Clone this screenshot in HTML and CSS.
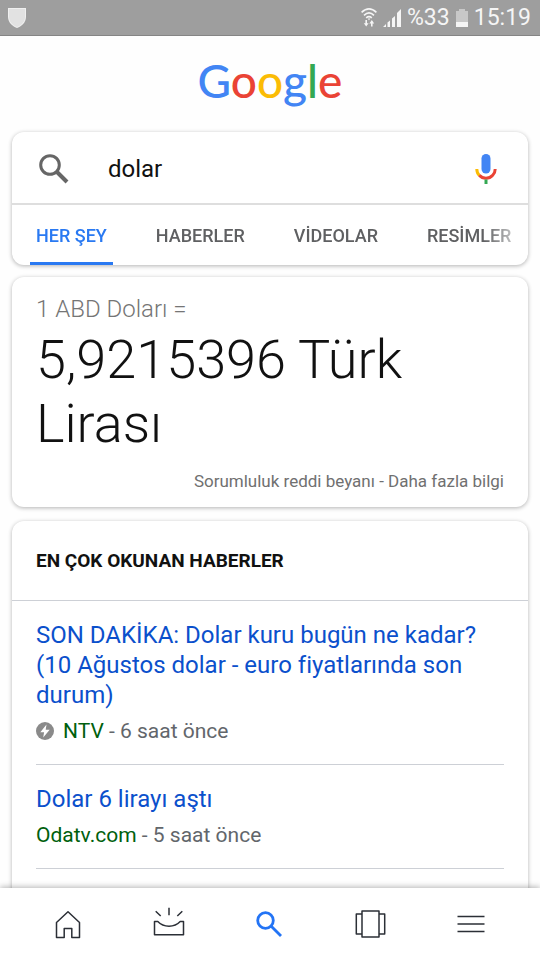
FILE: index.html
```html
<!DOCTYPE html>
<html lang="tr">
  <head>
    <meta charset="UTF-8" />
    <meta name="viewport" content="width=device-width, initial-scale=1" />
    <title>dolar - Google</title>
    <link rel="stylesheet" href="styles.css">
  </head>
  <body>
    <div class="status">
      <svg class="shield" width="18" height="20" viewBox="0 0 18 20">
        <path d="M0 0h18v9c0 5-4 9-9 11C4 18 0 14 0 9z" fill="#f0f0f0" />
        <path d="M1 1h16v8c0 4-3 8-8 10C4 17 1 13 1 9z" fill="#e2e2e2" />
      </svg>
      <svg width="16" height="19" viewBox="0 0 16 19" fill="none" stroke="#f5f5f5" stroke-width="1.6">
        <path d="M.6 4.4Q8-2.6 15.4 4.4M3 7.3Q8 2.600 13 7.300M5.200 9.800Q8 7.400 10.800 9.800" />
        <path d="M6.600 10.600h2.800L8 12.300z" fill="#f5f5f5" stroke="none" />
        <path d="M5.200 12v5M10.800 18.500v-5" />
        <path d="M2.800 15.200h4.800L5.200 18.600zM8.400 15.600h4.800L10.800 12z" fill="#f5f5f5" stroke="none" />
      </svg>
      <svg class="signal" width="18" height="18" viewBox="0 0 18 18" fill="#f5f5f5">
        <path d="M0 18l3-3v3zM4.500 13.500l2.500-2V18H4.500zM9 9.500l3-2.500v11H9zM14 4l4-4v18h-4z" />
      </svg>
      <span>%33</span>
      <svg class="battery" width="12" height="18" viewBox="0 0 12 18">
        <path d="M0 2h3V0h6v2h3v16H0z" fill="#c8c8c8" />
        <path d="M0 13h12v5H0z" fill="#f5f5f5" />
      </svg>
      <span>15:19</span>
    </div>

    <main class="feed">
      <h1 class="logo"><span class="blue">G</span><span class="red">o</span><span class="yellow">o</span><span class="blue">g</span><span class="green">l</span><span class="red">e</span></h1>

      <section class="card">
        <form class="search">
          <button class="icon-button" type="button" aria-label="Ara">
            <svg width="30" height="30" viewBox="0 0 30 30" fill="none" stroke="#666" stroke-width="3">
              <circle cx="11" cy="11" r="9.300" />
              <path d="M17.500 17.500L28 28" stroke-width="4" />
            </svg>
          </button>
          <input class="search-input" type="text" value="dolar" aria-label="Arama" />
          <button class="icon-button" type="button" aria-label="Sesli arama">
            <svg width="22" height="30" viewBox="0 0 22 30" fill="none" stroke-width="3">
              <rect x="6.500" y="0" width="9" height="19.500" rx="4.500" fill="#4285f4" />
              <path d="M1.800 15c0 2.800.9 4.800 2.600 6.500" stroke="#fbbc05" />
              <path d="M4.300 21.300c3.500 4 9.900 4 13.400 0 1.700-1.700 2.500-3.700 2.500-6.300" stroke="#ea4335" />
              <path d="M11 25.500V30" stroke="#34a853" />
            </svg>
          </button>
        </form>
        <nav class="tabs">
          <a class="tab active" href="#">HER ŞEY</a>
          <a class="tab" href="#">HABERLER</a>
          <a class="tab" href="#">VİDEOLAR</a>
          <a class="tab" href="#">RESİMLER</a>
        </nav>
      </section>

      <section class="card rate">
        <p class="rate-from">1 ABD Doları =</p>
        <p class="rate-value">5,9215396 Türk Lirası</p>
        <p class="rate-note"><a href="#">Sorumluluk reddi beyanı</a> - <a href="#">Daha fazla bilgi</a></p>
      </section>

      <section class="card news">
        <h2 class="news-heading">EN ÇOK OKUNAN HABERLER</h2>
        <article class="story">
          <a class="story-title" href="#">SON DAKİKA: Dolar kuru bugün ne kadar? (10 Ağustos dolar - euro fiyatlarında son durum)</a>
          <p class="story-meta">
            <svg class="amp" width="18" height="18" viewBox="0 0 18 18">
              <circle cx="9" cy="9" r="9" fill="#8a8a8a" />
              <path d="M10.500 2.500L4.300 10.200h3.800l-.9 5.300L13.700 7.800H9.700z" fill="#fff" />
            </svg>
            <span><span class="source">NTV</span> - 6 saat önce</span>
          </p>
        </article>
        <article class="story">
          <a class="story-title" href="#">Dolar 6 lirayı aştı</a>
          <p class="story-meta"><span><span class="source">Odatv.com</span> - 5 saat önce</span></p>
        </article>
        <article class="story"></article>
      </section>
    </main>

    <nav class="bottom-bar">
      <button class="bar-button" type="button" aria-label="Ana sayfa">
        <svg width="30" height="30" viewBox="0 0 30 30" fill="none" stroke="#2b2f36" stroke-width="1.500" stroke-linejoin="round">
          <path d="M3.500 13.500L15 2.800l11.500 10.700v15h-7.700v-9h-7.600v9H3.500z" />
        </svg>
      </button>
      <button class="bar-button" type="button" aria-label="Güncellemeler">
        <svg width="32" height="30" viewBox="0 0 32 30" fill="none" stroke="#2b2f36" stroke-width="1.500" stroke-linejoin="round">
          <path d="M1.500 12.500h3.300c5.800 6.200 16.600 6.200 22.400 0h3.300v13.300h-29z" />
          <path d="M16 -1.200v7.500M2.700 2.200l5 4.800M29.300 2.200l-5 4.800" />
        </svg>
      </button>
      <button class="bar-button" type="button" aria-label="Arama">
        <svg width="28" height="28" viewBox="0 0 28 28" fill="none" stroke="#2374f5" stroke-width="2.800">
          <circle cx="9.500" cy="10.500" r="7.800" />
          <path d="M15 16l10 10" />
        </svg>
      </button>
      <button class="bar-button" type="button" aria-label="Son sayfalar">
        <svg width="30" height="30" viewBox="0 0 30 30" fill="none" stroke="#2b2f36" stroke-width="1.500" stroke-linejoin="round">
          <rect x="6" y="2" width="17" height="26" />
          <path d="M6 5H.3v20H6M23 5h5.700v20H23" />
        </svg>
      </button>
      <button class="bar-button" type="button" aria-label="Menü">
        <svg width="28" height="30" viewBox="0 0 28 30" fill="none" stroke="#2b2f36" stroke-width="1.400">
          <path d="M-.5 7.500h27M-.5 15h27M-.5 22.500h27" />
        </svg>
      </button>
    </nav>
  </body>
</html>
```
FILE: styles.css
```css
* {
  box-sizing: border-box;
}
body {
  display: flex;
  flex-direction: column;
  height: 100vh;
  margin: 0;
  font-family: Roboto, sans-serif;
  background-color: #fefefe;
}
a {
  color: inherit;
  text-decoration: none;
}
p,
h1,
h2 {
  margin: 0;
}
button {
  padding: 0;
  border: none;
  background: none;
}
svg {
  display: block;
  flex: none;
  overflow: visible;
}

.status {
  display: flex;
  flex: none;
  align-items: center;
  gap: 6px;
  height: 36px;
  padding: 0 9px 0 8px;
  border-bottom: 1px solid #858585;
  background-color: #9e9e9e;
  color: #f5f5f5;
  font-size: 23px;
}
.shield {
  margin-right: auto;
}

.feed {
  flex: 1;
  min-height: 0;
  padding: 0 12px;
  overflow-y: auto;
  scrollbar-width: none;
}
.logo {
  height: 96px;
  font-family: Lato, sans-serif;
  font-size: 46px;
  font-weight: 500;
  line-height: 90px;
  text-align: center;
}
.blue {
  color: #4285f4;
}
.red {
  color: #ea4335;
}
.yellow {
  color: #fbbc05;
}
.green {
  color: #34a853;
}

.card {
  margin-bottom: 12px;
  border-radius: 12px;
  background-color: #fff;
  box-shadow: 0 1px 4px rgba(0, 0, 0, 0.3);
}
.search {
  display: flex;
  align-items: center;
  height: 73px;
  padding: 2px 31px 0 27px;
  border-bottom: 2px solid #dedede;
}
.search-input {
  flex: 1;
  min-width: 0;
  margin-left: 39px;
  padding: 0;
  border: none;
  outline: none;
  background: none;
  color: #111;
  font-family: inherit;
  font-size: 24px;
}
.tabs {
  display: flex;
  gap: 37px;
  height: 60px;
  margin-right: 16px;
  padding-left: 18px;
  overflow: hidden;
  mask-image: linear-gradient(to left, rgba(0, 0, 0, 0.4), #000 28px);
}
.tab {
  flex: none;
  padding: 0 6px;
  border-bottom: 3px solid transparent;
  color: #5f6062;
  font-size: 18px;
  font-weight: 500;
  line-height: 61px;
}
.active {
  border-color: #2979f2;
  border-radius: 3px 3px 0 0;
  color: #2979f2;
}

.rate {
  margin-bottom: 14px;
  padding: 17px 24px 14px;
}
.rate-from {
  color: #757575;
  font-size: 24px;
  font-weight: 300;
  line-height: 30px;
}
.rate-value {
  margin-top: 4px;
  color: #111;
  font-size: 54px;
  font-weight: 300;
  line-height: 64px;
}
.rate-note {
  margin-top: 13px;
  color: #707070;
  font-size: 17px;
  line-height: 24px;
  text-align: right;
}

.news-heading {
  padding: 0 24px;
  border-bottom: 1px solid #cdd0d6;
  color: #111;
  font-size: 19px;
  font-weight: 700;
  line-height: 79px;
}
.story {
  margin: 0 24px;
  padding: 19px 0 18px;
}
.story + .story {
  border-top: 1px solid #cdd0d6;
}
.story-title {
  display: block;
  color: #0b50cc;
  font-size: 24px;
  line-height: 30px;
}
.story-meta {
  display: flex;
  align-items: center;
  gap: 9px;
  margin-top: 6px;
  color: #62666b;
  font-size: 21px;
  line-height: 30px;
}
.source {
  color: #00600d;
}

.bottom-bar {
  display: flex;
  flex: none;
  align-items: center;
  justify-content: space-around;
  height: 72px;
  padding: 0 18px;
  background-color: #fff;
  box-shadow: 0 -1px 6px rgba(0, 0, 0, 0.3);
}
.bar-button {
  display: flex;
  flex: 1;
  justify-content: center;
}
```
